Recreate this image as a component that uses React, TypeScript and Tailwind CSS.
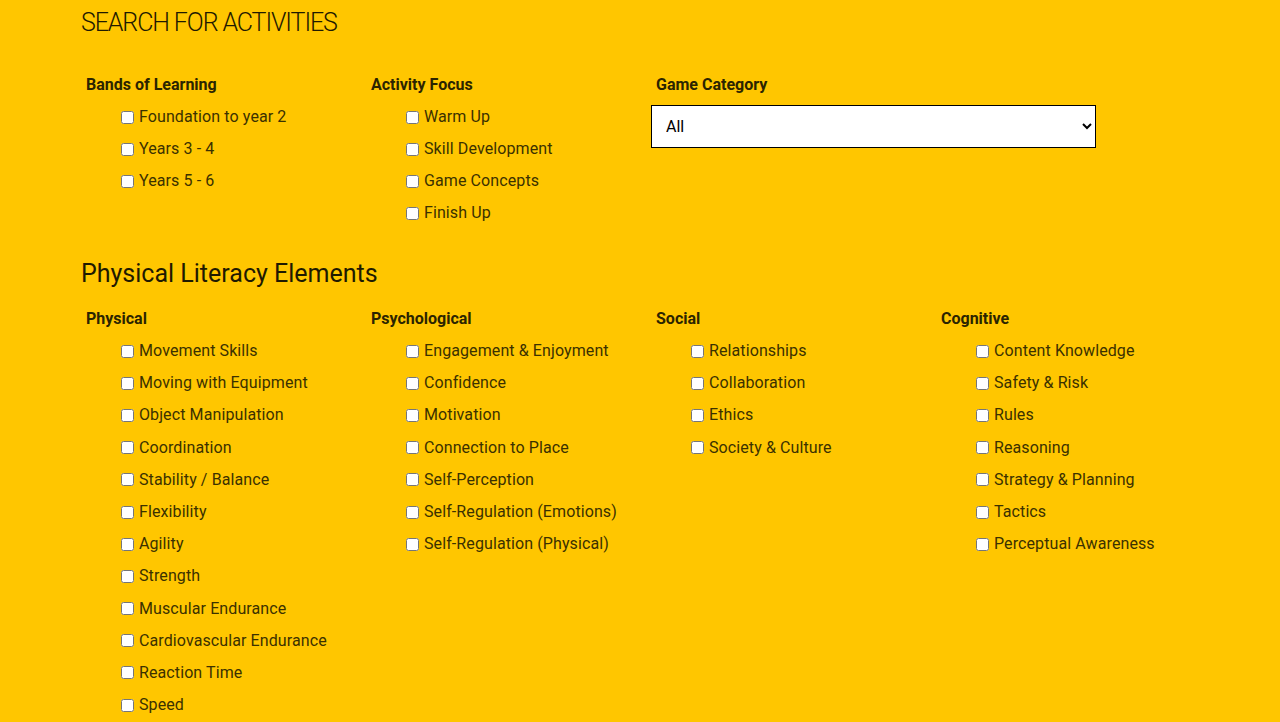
const bands = ["Foundation to year 2", "Years 3 - 4", "Years 5 - 6"];
const focus = ["Warm Up", "Skill Development", "Game Concepts", "Finish Up"];

const elements: { title: string; items: string[] }[] = [
  {
    title: "Physical",
    items: [
      "Movement Skills",
      "Moving with Equipment",
      "Object Manipulation",
      "Coordination",
      "Stability / Balance",
      "Flexibility",
      "Agility",
      "Strength",
      "Muscular Endurance",
      "Cardiovascular Endurance",
      "Reaction Time",
      "Speed",
    ],
  },
  {
    title: "Psychological",
    items: [
      "Engagement & Enjoyment",
      "Confidence",
      "Motivation",
      "Connection to Place",
      "Self-Perception",
      "Self-Regulation (Emotions)",
      "Self-Regulation (Physical)",
    ],
  },
  {
    title: "Social",
    items: ["Relationships", "Collaboration", "Ethics", "Society & Culture"],
  },
  {
    title: "Cognitive",
    items: [
      "Content Knowledge",
      "Safety & Risk",
      "Rules",
      "Reasoning",
      "Strategy & Planning",
      "Tactics",
      "Perceptual Awareness",
    ],
  },
];

function CheckGroup({ title, items, tall }: { title: string; items: string[]; tall?: boolean }) {
  return (
    <div className="w-[285px] shrink-0 pl-[5px]">
      <h3 className="h-8 flex items-center font-bold text-[16px] text-[#2b2400]">{title}</h3>
      <ul>
        {items.map((item) => (
          <li key={item} className={`${tall ? "h-[32.2px]" : "h-8"} flex items-center pl-[35px]`}>
            <label className="flex items-center gap-[5px] text-[16px] text-[#3b3100] tracking-[0.1px]">
              <input type="checkbox" className="m-0 w-[13px] h-[13px]" />
              {item}
            </label>
          </li>
        ))}
      </ul>
    </div>
  );
}

export default function App() {
  return (
    <div
      className="min-h-screen bg-[#ffc600] pl-[81px] pt-[7px]"
      style={{ fontFamily: "Roboto, 'Liberation Sans', sans-serif" }}
    >
      <h1 className="text-[25px] leading-8 font-light text-[#1f1a00] tracking-[-1.1px]">SEARCH FOR ACTIVITIES</h1>

      {/* filters */}
      <div className="flex mt-[30px]">
        <CheckGroup title="Bands of Learning" items={bands} />
        <CheckGroup title="Activity Focus" items={focus} />
        <div className="w-[285px] shrink-0 pl-[5px]">
          <h3 className="h-8 flex items-center font-bold text-[16px] text-[#2b2400]">Game Category</h3>
          <select className="mt-[4px] -ml-[5px] w-[445px] h-[43px] border border-black bg-white pl-[10px] pr-2 text-[16px] text-black rounded-none">
            <option>All</option>
          </select>
        </div>
      </div>

      <h2 className="mt-[29px] text-[25px] leading-8 text-[#1f1a00]">Physical Literacy Elements</h2>

      <div className="flex mt-[13px]">
        {elements.map((g) => (
          <CheckGroup key={g.title} title={g.title} items={g.items} tall />
        ))}
      </div>
    </div>
  );
}
